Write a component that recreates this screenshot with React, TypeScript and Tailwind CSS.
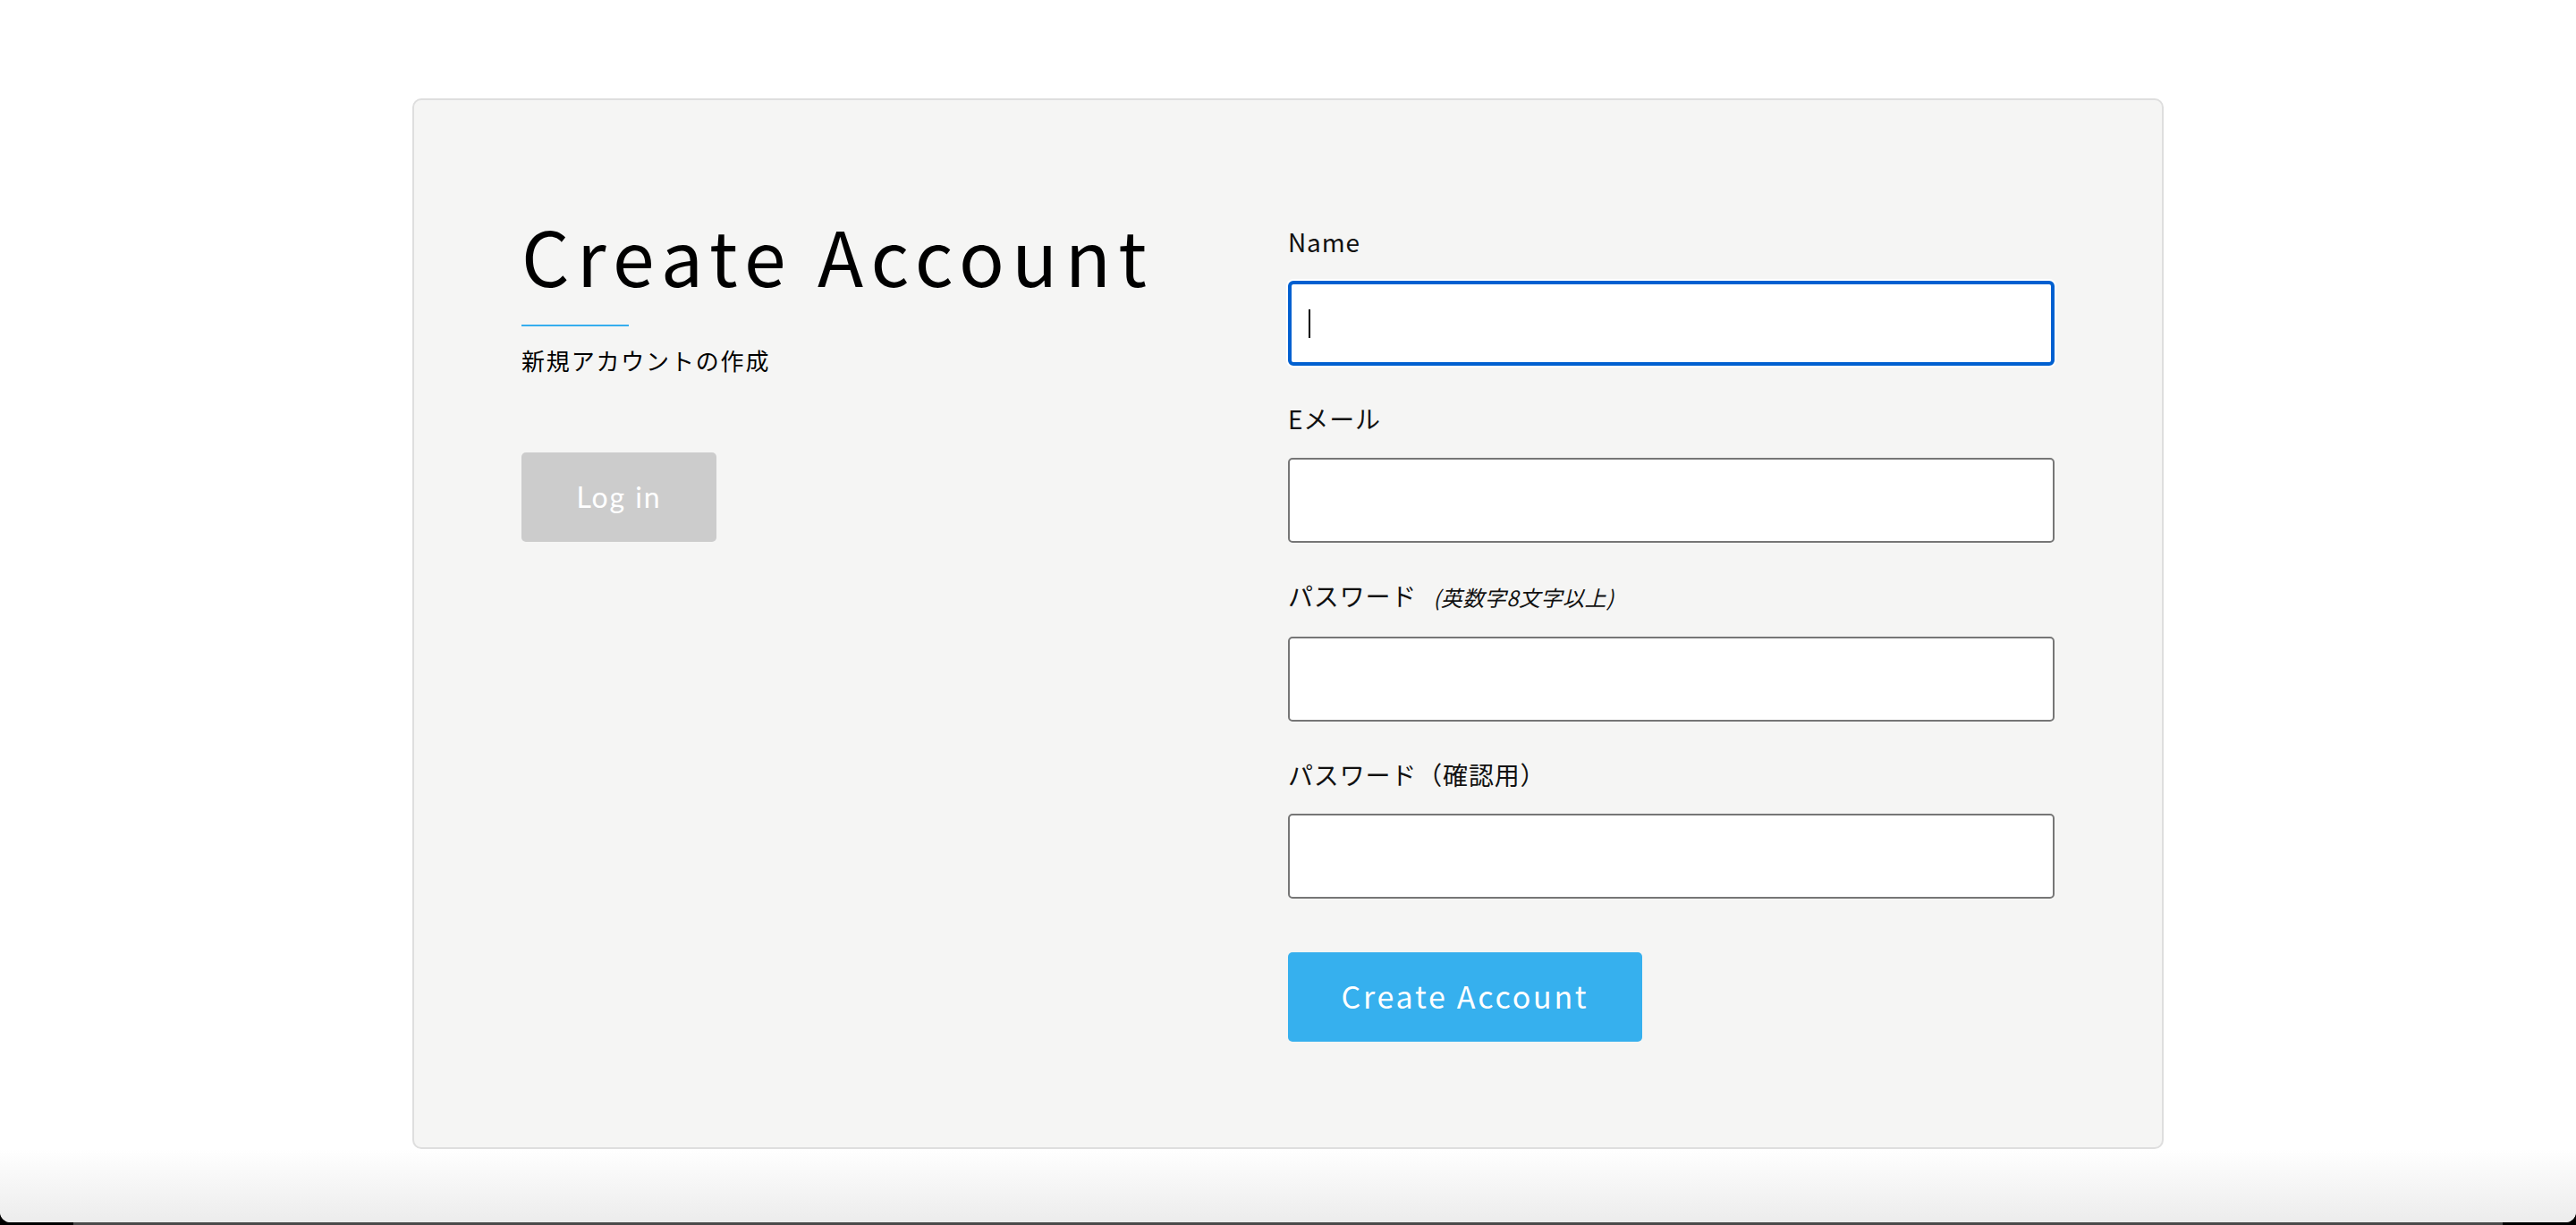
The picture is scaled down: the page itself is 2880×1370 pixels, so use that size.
import React from 'react'

const jp = "font-['Noto_Sans_CJK_JP','Noto_Sans',sans-serif]"

function Field({
  label,
  note,
  type = 'text',
  focused = false,
}: {
  label: string
  note?: string
  type?: string
  focused?: boolean
}) {
  return (
    <div className="flex flex-col">
      <label className="mb-[23px] flex items-baseline text-[28px] leading-[42px] tracking-[0.03em] text-[#111]">
        {label}
        {note && <span className="ml-[18px] text-[24px] italic tracking-[0.02em]">{note}</span>}
      </label>
      <div className="relative">
        <input
          type={type}
          className={
            focused
              ? 'block h-[95px] w-full rounded-[6px] border-[4px] border-[#0060d0] bg-white px-[19px] text-[28px] outline-none ring-2 ring-white'
              : 'block h-[95px] w-full rounded-[5px] border-2 border-[#767676] bg-white px-[21px] text-[28px] outline-none'
          }
        />
        {/* caret shown in the capture */}
        {focused && (
          <span className="pointer-events-none absolute left-[23px] top-[32px] h-[32px] w-[2px] bg-black" />
        )}
      </div>
    </div>
  )
}

export default function App() {
  return (
    <div className={`flex h-[1370px] flex-col bg-black ${jp}`}>
      <div className="flex flex-1 flex-col overflow-hidden rounded-b-[12px] bg-white">
        <main className="flex justify-center pt-[110px]">
          <div className="grid h-[1175px] w-[1958px] grid-cols-2 rounded-[10px] border-2 border-[#dedede] bg-[#f5f5f4] px-[120px] pt-[137px]">
            {/* left */}
            <div className="flex flex-col items-start">
              <h1 className="text-[84px] font-normal leading-[72px] tracking-[0.1em] text-black">
                Create Account
              </h1>
              <div className="mt-[42px] h-[2px] w-[120px] bg-[#36aeee]" />
              <p className="mt-[18px] text-[26px] leading-[39px] tracking-[0.07em] text-black">新規アカウントの作成</p>
              <button className="mt-[84px] flex h-[100px] w-[218px] items-center justify-center rounded-[5px] bg-[#cccccc] font-['Lato',sans-serif] text-[32px] tracking-[0.06em] text-white">
                Log in
              </button>
            </div>

            {/* right */}
            <form className="flex flex-col gap-[38px]" onSubmit={(e) => e.preventDefault()}>
              <Field label="Name" focused />
              <Field label="Eメール" type="email" />
              <Field label="パスワード" note="(英数字8文字以上)" type="password" />
              <Field label="パスワード（確認用）" type="password" />
              <button
                type="submit"
                className="mt-[22px] flex h-[100px] w-[396px] items-center justify-center rounded-[5px] bg-[#36b0ee] pb-[4px] text-[34px] tracking-[0.08em] text-white"
              >
                Create Account
              </button>
            </form>
          </div>
        </main>
        <div className="flex-1 bg-gradient-to-b from-white to-[#ececec]" />
      </div>
      <div className="flex h-[3px] justify-center bg-black">
        <div className="w-[2716px] bg-[#4a4a4a]" />
      </div>
    </div>
  )
}
